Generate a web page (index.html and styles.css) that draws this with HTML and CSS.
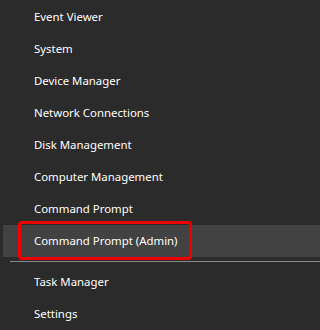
FILE: index.html
```html
<!DOCTYPE html>
<html>
<head>
<meta charset="utf-8">
<link rel="stylesheet" href="styles.css">
</head>
<body>
<div class="menu">
  <div class="item">Event Viewer</div>
  <div class="item">System</div>
  <div class="item">Device Manager</div>
  <div class="item">Network Connections</div>
  <div class="item">Disk Management</div>
  <div class="item">Computer Management</div>
  <div class="item">Command Prompt</div>
  <div class="item active">Command Prompt (Admin)<span class="mark"></span></div>
  <div class="sep"></div>
  <div class="item">Task Manager</div>
  <div class="item">Settings</div>
</div>
</body>
</html>
```
FILE: styles.css
```css
html, body {
  margin: 0;
  padding: 0;
  background: #2b2b2b;
}
.menu {
  height: 330px;
  overflow: hidden;
  padding-top: 1px;
  box-sizing: border-box;
  font-family: "Noto Sans", "Open Sans", sans-serif;
  font-size: 11.4px;
  color: #ffffff;
}
.item {
  height: 32px;
  line-height: 32px;
  padding-left: 34px;
  white-space: nowrap;
}
.item.active {
  position: relative;
  margin-left: 3px;
  padding-left: 31px;
  background: #424242;
}
.mark {
  position: absolute;
  left: 15px;
  top: -4px;
  width: 174px;
  height: 39px;
  box-sizing: border-box;
  border: 3px solid #ee0000;
  border-radius: 4px;
}
.sep {
  height: 1px;
  margin: 4px 0 4px 10px;
  background: #8a8a8a;
}
```
